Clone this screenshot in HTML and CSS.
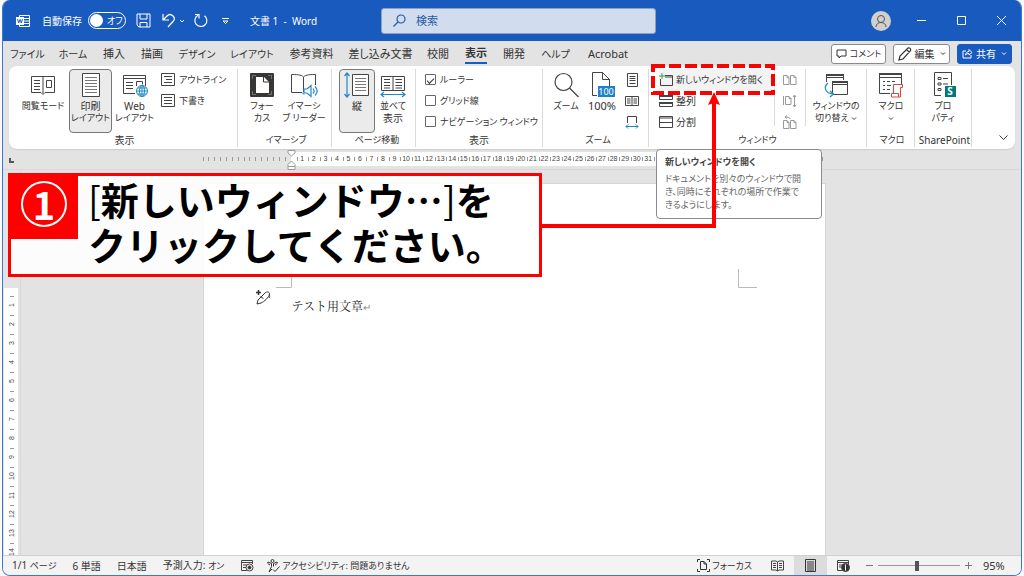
FILE: index.html
```html
<!DOCTYPE html>
<html lang="ja">
<head>
<meta charset="utf-8">
<title>文書 1 - Word</title>
<link rel="stylesheet" href="styles.css">
</head>
<body>
<div class="window">
  <header class="titlebar">
    <div class="title-left">
      <svg class="word-logo" width="14" height="14" viewBox="0 0 14 14" fill="none" stroke="#fff"><path d="M3.5 3V1.500h10v11h-10V11M8 4.500h5M8 7h5M8 9.500h5"/><path fill="#fff" stroke="none" d="M0 3h8v8H0z"/><path stroke="#185abd" d="M1.500 5l1.200 4L4 5.500 5.300 9l1.200-4"/></svg>
      <label class="autosave"><span class="autosave-name">自動保存</span><span class="switch"><input type="checkbox"><span class="kana">オフ</span></span></label>
      <button class="tool save" aria-label="保存"><svg width="15" height="15" viewBox="0 0 15 15" fill="none" stroke="#fff"><path d="M1 1h13v13H3l-2-2zM4 1v5h7V1M4 14V9.500h7V14"/></svg></button>
      <button class="tool undo" aria-label="元に戻す"><svg width="13" height="15" viewBox="0 0 13 15" fill="none" stroke="#fff" stroke-width="1.200"><path d="M1 1v6h6M1 7l4-4c2-2 4-2 6 0s1.500 4 0 5.500L6 14"/></svg><svg width="6" height="4" viewBox="0 0 6 4" fill="none" stroke="#fff"><path d="M1 1l2 2 2-2"/></svg></button>
      <button class="tool redo" aria-label="繰り返し"><svg width="14" height="15" viewBox="0 0 14 15" fill="none" stroke="#fff" stroke-width="1.200"><path d="M4 2.200A6 6 0 1 0 10.500 2.700M1 1.500h4v4"/></svg></button>
      <button class="tool more" aria-label="クイック アクセス"><svg width="7" height="8" viewBox="0 0 7 8" fill="none" stroke="#fff"><path d="M0 1.500h7M1 4l2.500 2.500L6 4z"/></svg></button>
      <span class="doc-title">文書 1&nbsp; -&nbsp; Word</span>
    </div>
    <label class="search"><svg width="13" height="13" viewBox="0 0 13 13" fill="none" stroke="#2458a8" stroke-width="1.200"><circle cx="8" cy="5" r="4"/><path d="M5 8l-4.500 4.500"/></svg><input type="search" placeholder="検索" aria-label="検索"></label>
    <div class="title-right">
      <button class="avatar" aria-label="アカウント"><svg width="20" height="20" viewBox="0 0 20 20" fill="none" stroke="#555"><circle cx="10" cy="10" r="10" fill="#d2d0ce" stroke="none"/><circle cx="10" cy="8" r="3.500"/><path d="M5 16c0-6 10-6 10 0"/></svg></button>
      <button class="caption" aria-label="最小化"><svg width="9" height="9" viewBox="0 0 9 9" stroke="#fff"><path d="M0 4.500h9"/></svg></button>
      <button class="caption" aria-label="最大化"><svg width="9" height="9" viewBox="0 0 9 9" fill="none" stroke="#fff"><path d="M.5.5h8v8h-8z"/></svg></button>
      <button class="caption" aria-label="閉じる"><svg width="9" height="9" viewBox="0 0 9 9" stroke="#fff"><path d="M0 0l9 9M9 0L0 9"/></svg></button>
    </div>
  </header>

  <div class="tab-row">
    <nav class="tabs">
      <button class="kana">ファイル</button><button class="kana">ホーム</button><button>挿入</button><button>描画</button><button class="kana">デザイン</button><button class="kana">レイアウト</button><button>参考資料</button><button>差し込み文書</button><button>校閲</button><button class="current"><span>表示</span></button><button>開発</button><button class="kana">ヘルプ</button><button>Acrobat</button>
    </nav>
    <div class="actions">
      <button class="action"><svg width="11" height="10" viewBox="0 0 11 10" fill="none" stroke="#333"><path d="M1 1h9v6H5L3 9V7H1z"/></svg><span class="kana">コメント</span></button>
      <button class="action edit"><svg width="14" height="14" viewBox="0 0 14 14" fill="none" stroke="#333" stroke-width="1.200"><path d="M1 13l1-4 8-8c1.500-.8 3.500 1 2.500 2.700L5 12zM8.500 2.500l3 3"/></svg>編集<svg class="arrow" width="6" height="4" viewBox="0 0 6 4" fill="none" stroke="#333"><path d="M1 .5l2 2 2-2"/></svg></button>
      <button class="action share"><svg width="11" height="11" viewBox="0 0 11 11" fill="none" stroke="#fff"><path d="M4 3H1v7h8V7M3.500 7C4 4.500 5.500 3.500 7 3.500V1.500L10 4.500 7 7V5.500C5.500 5.500 4.500 6 3.500 7z"/></svg>共有<svg class="arrow" width="6" height="4" viewBox="0 0 6 4" fill="none" stroke="#fff"><path d="M1 .5l2 2 2-2"/></svg></button>
    </div>
  </div>

  <main class="workspace">
  <section class="ribbon">
    <div class="group g-views">
      <div class="body">
        <button class="big w50"><svg width="26" height="24" viewBox="0 0 26 24" fill="none" stroke="#444"><path d="M13 3.500H1.500v16H11l2 2 2-2h9.500v-16zM13 3.500v17M4 7.500h6M4 10.500h6M4 13.500h6M4 16.500h6M16.500 7.500h5v7h-5z"/></svg><span class="kana">閲覧モード</span></button>
        <button class="big w43 pressed"><svg width="20" height="24" viewBox="0 0 20 24" fill="none" stroke="#444"><path fill="#fff" d="M1.500.5h17v23h-17z"/><path stroke="#777" d="M4 4.500h12M4 7.500h12M4 10.500h12M4 13.500h12M4 16.500h12M4 19.500h12"/></svg><span>印刷</span><span class="kana">レイアウト</span></button>
        <button class="big w43"><svg width="26" height="24" viewBox="0 0 26 24" fill="none" stroke="#444"><path d="M13 20.500H1.500v-18h22V13M1.500 5.500h22M4 9.500h7M4 12.500h7M4 15.500h7M14.500 13V8.500h6v3"/><g stroke="#2088c9"><circle cx="20" cy="18" r="5.500" fill="#fff"/><path d="M14.500 18h11M20 12.500v11M15.500 15h9M15.500 21h9"/><ellipse cx="20" cy="18" rx="2.500" ry="5.500"/></g></svg><span>Web</span><span class="kana">レイアウト</span></button>
        <div class="rows after-big">
          <button class="small"><svg width="14" height="13" viewBox="0 0 14 13" fill="none" stroke="#444"><path d="M.5.500h13v12H.5zM3 3.500h8M3 9.500h8M5 6.500h6"/></svg>アウトライン</button>
          <button class="small"><svg width="14" height="13" viewBox="0 0 14 13" fill="none" stroke="#444"><path d="M.5.500h13v12H.5zM3 3.500h8M3 6.500h8M3 9.500h8"/></svg>下書き</button>
        </div>
      </div>
      <div class="name">表示</div>
    </div>
    <div class="group g-immersive">
      <div class="body">
        <button class="big w42"><svg width="24" height="24" viewBox="0 0 24 24"><rect width="24" height="24" rx="1" fill="#393735"/><path fill="none" stroke="#fff" d="M2.500 6V2.500H6M18 2.500h3.500V6M2.500 18v3.500H6M18 21.500h3.500V18" opacity=".3"/><path fill="#fff" d="M6 4h8l5 5v11H6z"/><path fill="none" stroke="#393735" d="M13.500 4v5H19"/></svg><span class="kana">フォー</span><span class="kana">カス</span></button>
        <button class="big w42"><svg width="26" height="24" viewBox="0 0 26 24" fill="none" stroke="#444"><path d="M12.500 4c-2-2.500-8-2.500-12-2.500v18H11l2 2M12.500 4v15M12.500 4c2-2.500 8-2.500 12-2.500V12"/><path stroke="#2088c9" stroke-width="1.200" d="M13 16v4h3l4 3.500v-11L16 16zM22 15.500c1.500 2 1.500 3.500 0 5M24 13.500c3 3 3 6 0 9"/></svg><span class="kana">イマーシ</span><span class="kana">ブ リーダー</span></button>
      </div>
      <div class="name kana">イマーシブ</div>
    </div>
    <div class="group g-move">
      <div class="body">
        <button class="big w35 pressed"><svg width="26" height="26" viewBox="0 0 26 26" fill="none" stroke="#444"><path fill="#fff" d="M8.500 2.500h16v21h-16z"/><path stroke="#777" d="M11 6.500h11M11 9.500h11M11 12.500h11M11 15.500h11M11 18.500h11"/><path stroke="#2088c9" stroke-width="1.200" d="M3 1v24M.5 4L3 1l2.500 3M.5 22L3 25l2.500-3"/></svg><span>縦</span></button>
        <button class="big w35"><svg width="26" height="24" viewBox="0 0 26 24" fill="none" stroke="#444"><path d="M1.500 3.500h23v14h-23zM13 3.500v14M4 6.500h6M4 9.500h6M4 12.500h6M4 15h6M15.500 6.500H22M15.500 9.500H22M15.500 12.500H22M15.500 15H22"/><path stroke="#2088c9" stroke-width="1.200" d="M1 21.500h24M4 19l-3 2.500L4 24M22 19l3 2.500L22 24"/></svg><span class="kana">並べて</span><span>表示</span></button>
      </div>
      <div class="name kana">ページ移動</div>
    </div>
    <div class="group g-show">
      <div class="body">
        <div class="rows">
          <label class="small"><input type="checkbox" class="tick" checked>ルーラー</label>
          <label class="small"><input type="checkbox" class="tick">グリッド線</label>
          <label class="small"><input type="checkbox" class="tick">ナビゲーション ウィンドウ</label>
        </div>
      </div>
      <div class="name">表示</div>
    </div>
    <div class="group g-zoom">
      <div class="body">
        <button class="big w35"><svg width="26" height="24" viewBox="0 0 26 24" fill="none" stroke="#444" stroke-width="1.200"><circle cx="10.500" cy="9" r="8.500"/><path d="M16.500 15l9 9"/></svg><span class="kana">ズーム</span></button>
        <button class="big w35"><svg width="26" height="26" viewBox="0 0 26 26" fill="none" stroke="#444"><path d="M8 23.500H3.500V.5h10l7 7V14M13.500.5v7h7"/><path fill="#1c83cb" stroke="none" d="M9 14h17v11H9z"/><text x="17" y="23" class="hundred">100</text></svg><span class="percent">100%</span></button>
        <div class="rows icons">
          <button class="small" aria-label="1 ページ"><svg width="14" height="14" viewBox="0 0 14 14" fill="none" stroke="#444"><path d="M2.500.5h10v13h-10zM4.500 3.500h6M4.500 5.500h6M4.500 7.500h6M4.500 10.500h6"/></svg></button>
          <button class="small" aria-label="複数ページ"><svg width="14" height="14" viewBox="0 0 14 14" fill="none" stroke="#444"><path d="M.5 2.500h13v9H.5zM7 2.500v9M2 5h3.500M2 7h3.500M2 9h3.500M8.500 5H12M8.500 7H12M8.500 9H12"/></svg></button>
          <button class="small" aria-label="ページ幅を基準に表示"><svg width="14" height="14" viewBox="0 0 14 14" fill="none" stroke="#444"><path d="M2.500 8V1.500h9V8"/><path stroke="#2088c9" d="M1 11.500h12M3 9.500l-2 2 2 2M11 9.500l2 2-2 2"/></svg></button>
        </div>
      </div>
      <div class="name kana">ズーム</div>
    </div>
    <div class="group g-window">
      <div class="body">
        <div class="rows arrange">
          <button class="small hover"><svg width="14" height="14" viewBox="0 0 14 14" fill="none" stroke="#444"><path d="M1.500 6v6.500h12v-10H6M6 4h8"/><path stroke="#2fa04a" d="M3 0v6M0 3h6"/></svg>新しいウィンドウを開く</button>
          <button class="small"><svg width="14" height="14" viewBox="0 0 14 14" fill="none" stroke="#444"><path d="M.5 1.500h13v4H.5zM.5 8.500h13v4H.5z"/><path stroke-width="2" d="M0 2h14M0 9h14"/></svg><span class="kanji">整列</span></button>
          <button class="small"><svg width="14" height="14" viewBox="0 0 14 14" fill="none" stroke="#444"><path d="M.5 1.500h13v11H.5zM0 3h14M.5 7.500h13"/></svg><span class="kanji">分割</span></button>
          <div class="hover-marker"><svg width="124" height="31" viewBox="0 0 124 31" fill="none" stroke="#f00" stroke-width="4"><path stroke-dasharray="12 4" d="M2 2h120v27H2z"/></svg></div>
        </div>
        <div class="rows compare">
          <button class="small" disabled aria-label="並べて比較"><svg width="14" height="14" viewBox="0 0 14 14" fill="none" stroke="#999"><path d="M.5 2.500H4l2 2v7H.5zM7.500 2.500H11l2 2v7H7.500zM4 2.500v2h2M11 2.500v2h2"/></svg></button>
          <button class="small" disabled aria-label="同時にスクロール"><svg width="14" height="14" viewBox="0 0 14 14" fill="none" stroke="#999"><path d="M.5 2v9M2.500 2.500H6l2 2v6H2.500zM6 2.500v2h2M11.500 1v12M10 3l1.500-2L13 3M10 11l1.500 2L13 11"/></svg></button>
          <button class="small" disabled aria-label="ウィンドウの位置を元に戻す"><svg width="14" height="14" viewBox="0 0 14 14" fill="none" stroke="#999"><path d="M.5 5.500H4l2 2v6H.5zM7.500 5.500H11l2 2v6H7.500zM4 5.500v2h2M11 5.500v2h2M7 4c0-2-3-2-5-2M4 .5L2 2l2 1.500"/></svg></button>
        </div>
        <button class="big switch-win"><svg width="26" height="24" viewBox="0 0 26 24" fill="none" stroke="#444"><path d="M3.500 9V1.500h17V7M9.500 21.500v-13h15v13zM3.500 4.500h17M9.500 11.500h15"/><path stroke-width="2" d="M3 2h18M9 9h16"/><path stroke="#2088c9" stroke-width="1.200" d="M5 10c-5 4-3 10 5 11M7 18l3.500 3L7 24"/></svg><span class="kana">ウィンドウの</span><span class="kana">切り替え <svg class="arrow" width="6" height="4" viewBox="0 0 6 4" fill="none" stroke="#444"><path d="M1 .5l2 2 2-2"/></svg></span></button>
      </div>
      <div class="name kana">ウィンドウ</div>
    </div>
    <div class="group g-macro">
      <div class="body">
        <button class="big w42"><svg width="26" height="26" viewBox="0 0 26 26" fill="none" stroke="#444"><path d="M12 21.500H1.500V1.500h22V12M1.500 5.500h22M5 9.500h2M9 9.500h3M14 9.500h3M5 13.500h2M9 13.500h4M5 17.500h2M9 17.500h3"/><path stroke-width="2" d="M1 2h23"/><path fill="#fff" stroke="#e0453c" d="M15.500 21.500v-9h9v3h-2V25h-9v-3.500h7V25"/></svg><span class="kana">マクロ</span><span><svg class="arrow" width="6" height="4" viewBox="0 0 6 4" fill="none" stroke="#444"><path d="M1 .5l2 2 2-2"/></svg></span></button>
      </div>
      <div class="name kana">マクロ</div>
    </div>
    <div class="group g-share">
      <div class="body">
        <button class="big w50"><svg width="26" height="26" viewBox="0 0 26 26" fill="none" stroke="#444"><path d="M11 23.500H4.500V.5h17V13M8 5.500h3v2H8zM13 6.500h5M8 11h3v2H8zM13 12h5M8 16.500h3v2H8z"/><path fill="#03787c" stroke="none" d="M15 14h11v11H15z"/><text x="20" y="23" class="s-mark">S</text></svg><span class="kana">プロ</span><span class="kana">パティ</span></button>
      </div>
      <div class="name">SharePoint</div>
    </div>
    <button class="collapse" aria-label="リボンを折りたたむ"><svg width="9" height="6" viewBox="0 0 9 6" fill="none" stroke="#333"><path d="M.5.500l4 4 4-4"/></svg></button>
  </section>

  <div class="ruler-row">
    <div class="tab-stop"><svg width="5" height="5" viewBox="0 0 5 5" fill="none" stroke="#555" stroke-width="2"><path d="M1 0v4h4"/></svg></div>
    <div class="ruler-space">
      <div class="ruler">
        <div class="ruler-margin"><i></i><i></i><i></i><i></i><i></i><i></i><i></i><i></i><i></i><i></i><i></i><i></i><i></i><i></i><i></i></div>
        <div class="scale">
          <svg class="indent" width="9" height="20" viewBox="0 0 9 20" fill="#fff" stroke="#999"><path d="M1 .5h7V3L4.500 6 1 3zM1 14.500L4.500 11 8 14.500v5H1zM1 16.500h7"/></svg>
          <b>1</b><b>2</b><b>3</b><b>4</b><b>5</b><b>6</b><b>7</b><b>8</b><b>9</b><b>10</b><b>11</b><b>12</b><b>13</b><b>14</b><b>15</b><b>16</b><b>17</b><b>18</b><b>19</b><b>20</b><b>21</b><b>22</b><b>23</b><b>24</b><b>25</b><b>26</b><b>27</b><b>28</b><b>29</b><b>30</b><b>31</b><b></b><b></b><b></b><b></b><b></b><b></b><b></b><b></b>
        </div>
        <div class="ruler-end"><i></i></div>
      </div>
    </div>
  </div>

  <div class="canvas">
    <div class="v-ruler"><div class="v-scale"><b>1</b><b>2</b><b>3</b><b>4</b><b>5</b><b>6</b><b>7</b><b>8</b><b>9</b><b>10</b><b>11</b><b>12</b><b>13</b><b>14</b></div></div>
    <div class="page-space">
      <article class="page">
        <svg class="corner-left" width="19" height="19" viewBox="0 0 19 19" fill="none" stroke="#bbb"><path d="M3 18.500h15.500V0"/></svg>
        <svg class="corner-right" width="19" height="19" viewBox="0 0 19 19" fill="none" stroke="#bbb"><path d="M.5 0v18.500H19"/></svg>
        <svg class="pen" width="15" height="15" viewBox="0 0 15 15" fill="none" stroke="#333"><path d="M2.500 0v5M0 2.500h5" stroke-width="1.500"/><path d="M1 14l1-4 7-7c2-2 5-1 4.500 1.500S8 12 5 13zM4.500 6.500l3 2M13 4c1 2 1 3 0 4"/></svg>
        <p class="doc-text">テスト用文章<span class="mark">↵</span></p>
      </article>
    </div>
  </div>

  <aside class="callout">
    <div class="step"><span>1</span></div>
    <p><span class="bracket">[</span>新しいウィンドウ…<span class="bracket">]</span>を<br>クリックしてください。</p>
  </aside>
  <div class="tooltip" role="tooltip"><strong>新しいウィンドウを開く</strong><p>ドキュメントを別々のウィンドウで開<br>き、同時にそれぞれの場所で作業で<br>きるようにします。</p></div>
  <svg class="pointer" width="180" height="138" viewBox="0 0 180 138"><path fill="none" stroke="#f00" stroke-width="4" d="M0 135h174V10"/><path fill="#f00" d="M174 1l6 13-6-2-6 2z"/></svg>
  </main>

  <footer class="status">
    <div class="status-left">
      <span>1/1 <span class="kana">ページ</span></span><span>6 単語</span><span>日本語</span><span>予測入力: <span class="kana">オン</span></span>
      <svg width="14" height="13" viewBox="0 0 14 13" fill="none" stroke="#444"><path d="M7 11.500H1.500v-10h11V5M1.500 3.500h11M3 6h4M3 8.500h3"/><circle cx="9.500" cy="8.500" r="3.500" fill="#f3f3f3"/><circle cx="9.500" cy="8.500" r="1.500" fill="#333"/></svg>
      <button class="access kana"><svg width="13" height="14" viewBox="0 0 13 14" fill="none" stroke="#333"><circle cx="5.500" cy="2" r="1.500"/><path d="M1 3l3.500 1.500v3L2 13M10 3L6.500 4.500v3M2 13l3-3M1 3c-1 1 0 2 2 3M10 3c1 1 0 2-2 3M6 10.500l2 2 4.500-5"/></svg>アクセシビリティ: 問題ありません</button>
    </div>
    <div class="status-right">
      <button class="focus kana"><svg width="13" height="13" viewBox="0 0 13 13" fill="none" stroke="#333"><path d="M.5 3V.5H3M10 .5h2.500V3M.5 10v2.500H3M10 12.500h2.500V10M3.500 2.500H7l2.500 2.500v5.500h-6zM7 2.500V5h2.500"/></svg>フォーカス</button>
      <button class="view" aria-label="閲覧モード"><svg width="13" height="12" viewBox="0 0 13 12" fill="none" stroke="#444"><path d="M6.500 2L5 1H.5v9H5l1.500 1L8 10h4.500V1H8zM6.500 2v9M2 3.500h3M2 5.500h3M2 7.500h3M8 3.500h3M8 5.500h3M8 7.500h3"/></svg></button>
      <button class="view active" aria-label="印刷レイアウト"><svg width="11" height="13" viewBox="0 0 11 13" fill="none" stroke="#333"><path d="M.5.500h10v12H.5zM2 3h7M2 5h7M2 7h7M2 9h7M2 11h7"/></svg></button>
      <button class="view" aria-label="Web レイアウト"><svg width="13" height="13" viewBox="0 0 13 13" fill="none" stroke="#444"><path d="M5 11.500H.5V1.500h11V5M.5 3.500h11M2 6h4M2 8h3"/><circle cx="8.500" cy="8.500" r="4" fill="#333"/><path stroke="#fff" d="M8.500 5.500v6"/></svg></button>
      <button class="step-btn" aria-label="縮小"><svg width="7" height="7" viewBox="0 0 7 7" stroke="#777"><path d="M0 3.500h7"/></svg></button>
      <input class="zoom" type="range" min="10" max="190" value="95" aria-label="ズーム">
      <button class="step-btn" aria-label="拡大"><svg width="7" height="7" viewBox="0 0 7 7" stroke="#777"><path d="M0 3.500h7M3.500 0v7"/></svg></button>
      <span class="level">95%</span>
    </div>
  </footer>
</div>
</body>
</html>
```
FILE: styles.css
```css
* { box-sizing: border-box; }
body {
  margin: 0;
  background: #fafafa;
  color: #333;
  font: 10px/12px "Noto Sans", "Noto Sans CJK JP", sans-serif;
  font-feature-settings: "palt";
}
button, input {
  font: inherit;
  font-feature-settings: inherit;
  color: inherit;
  background: none;
  border: 0;
  padding: 0;
  margin: 0;
}
p { margin: 0; }
svg { display: block; flex: none; overflow: visible; }
.kana { font-size: 9px; }
.window {
  height: 100vh;
  margin: 0 2px;
  display: flex;
  flex-direction: column;
  border: solid #3b78cf;
  border-width: 0 1px 1px;
  border-radius: 8px;
  overflow: hidden;
  background: #e3e3e3;
}

/* title bar */
.titlebar {
  display: flex;
  align-items: center;
  height: 41px;
  flex: none;
  background: #185abd;
  color: #fff;
}
.title-left { display: flex; align-items: center; flex: 0 0 378px; padding-left: 13px; white-space: nowrap; }
.autosave { display: flex; align-items: center; gap: 6px; margin-left: 12px; }
.autosave-name { width: 40px; }
.switch {
  display: flex;
  align-items: center;
  gap: 4px;
  width: 38px;
  height: 17px;
  padding-left: 1px;
  border: 1px solid #fff;
  border-radius: 9px;
}
.switch input { appearance: none; width: 13px; height: 13px; border-radius: 50%; background: #fff; }
.tool { display: flex; align-items: center; }
.save { margin-left: 10px; }
.undo { margin-left: 11px; width: 23px; justify-content: space-between; }
.redo { margin-left: 9px; }
.more { margin-left: 14px; }
.doc-title { margin-left: 21px; }
.search {
  display: flex;
  align-items: center;
  gap: 10px;
  flex: 0 1 275px;
  height: 26px;
  padding: 0 11px;
  border: 1px solid #8f9fb8;
  border-radius: 3px;
  background: #d1dcee;
}
.search input { flex: 1; min-width: 0; font-size: 11px; outline: 0; }
.search input::placeholder { color: #2458a8; opacity: 1; }
.title-right { display: flex; align-items: center; margin-left: auto; }
.avatar { margin-right: 10px; }
.caption { display: flex; justify-content: center; width: 40px; }

/* tabs */
.tab-row { display: flex; justify-content: space-between; align-items: center; height: 25px; flex: none; padding: 0 9px 0 1px; }
.tabs {
  display: grid;
  grid-template-columns: 47px 44px 38px 38px 52px 58px 61px 77px 38px 38px 38px 45px 60px;
  font-size: 11px;
  line-height: 18px;
}
.tabs button { white-space: nowrap; text-align: center; }
.tabs .kana { font-size: 10px; }
.current { font-weight: 700; }
.current span { display: inline-block; border-bottom: 2px solid #185abd; }
.actions { display: flex; gap: 7px; }
.action {
  display: flex;
  align-items: center;
  justify-content: center;
  gap: 3px;
  width: 55px;
  height: 20px;
  border: 1px solid #8a8a8a;
  border-radius: 3px;
  background: #fff;
  white-space: nowrap;
}
.edit { width: 57px; }
.action .arrow { margin-left: 2px; }
.share { border-color: #185abd; background: #185abd; color: #fff; }

/* ribbon */
.workspace { flex: 1; min-height: 0; position: relative; display: flex; flex-direction: column; }
.ribbon {
  display: flex;
  flex: none;
  margin: 0 6px;
  padding: 3px 0 2px;
  border-radius: 8px;
  background: #fff;
  box-shadow: 0 1px 1px #ccc;
}
.group { border-right: 1px solid #dadada; }
.body { display: flex; height: 64px; }
.name { text-align: center; line-height: 14px; white-space: nowrap; }
.g-views { width: 229px; padding-left: 9px; }
.g-views .body { gap: 1px; }
.g-immersive { width: 94px; padding-left: 3px; }
.g-move { width: 84px; padding-left: 7px; }
.g-show { width: 127px; padding-left: 9px; }
.g-zoom { width: 106px; padding-left: 5px; }
.g-window { width: 218px; }
.g-macro { width: 48px; padding-left: 3px; }
.g-share { width: 57px; padding-left: 3px; }
.g-views .name { margin-left: -6px; }
.g-show .name { margin-left: -9px; }
.big {
  display: flex;
  flex-direction: column;
  align-items: center;
  justify-content: flex-start;
  flex: none;
  padding-top: 2px;
  border: 1px solid transparent;
  border-radius: 4px;
  white-space: nowrap;
}
.big > svg { height: 26px; margin-bottom: 2px; }
.big > span { height: 12px; line-height: 12px; }
.w35 { width: 36px; }
.w42 { width: 42px; }
.w43 { width: 43px; }
.w50 { width: 50px; }
.pressed { border-color: #777; background: #ebebeb; }
.percent { font-size: 11px; }
.arrow { display: inline-block; vertical-align: middle; }
.hundred { fill: #fff; stroke: none; font-size: 9px; text-anchor: middle; }
.s-mark { fill: #fff; stroke: none; font-size: 10px; font-weight: 700; text-anchor: middle; }
.rows { display: flex; flex-direction: column; align-items: flex-start; }
.after-big { margin-left: 4px; }
.small { display: flex; align-items: center; gap: 4px; flex: none; height: 21px; font-size: 9px; white-space: nowrap; }
.kanji { font-size: 10px; }
.icons { margin-left: 5px; }
.tick {
  appearance: none;
  display: grid;
  place-items: center;
  width: 11px;
  height: 11px;
  border: 1px solid #666;
  border-radius: 1px;
  background: #fff;
}
.tick:checked::before { content: ""; width: 6px; height: 3px; border: solid #333; border-width: 0 0 1px 1px; rotate: -45deg; }
.arrange { width: 126px; height: 57px; padding-left: 10px; border-right: 1px solid #dadada; position: relative; }
.arrange .small { gap: 3px; }
.arrange .hover { width: 112px; background: #f3f3f3; }
.hover-marker { position: absolute; left: 2px; top: -5px; }
.compare { width: 31px; height: 57px; align-items: center; border-right: 1px solid #dadada; }
.switch-win { width: 60px; }
.collapse { margin: auto 7px 6px auto; }

/* rulers */
.ruler-row { display: flex; height: 21px; flex: none; border-bottom: 1px solid #d8d8d8; }
.tab-stop { width: 18px; padding: 9px 0 0 6px; }
.ruler-space, .page-space { flex: 1; display: flex; justify-content: center; padding-right: 14px; }
.ruler { display: flex; flex: 0 1 623px; min-width: 0; padding: 3px 0; }
.ruler-margin { display: flex; align-items: center; width: 88px; }
.ruler-margin i { flex: 1; height: 4px; border-left: 1px solid #999; }
.scale { position: relative; display: flex; align-items: center; width: 456px; padding-left: 6px; background: #fff; font: 7px/14px "Liberation Sans", sans-serif; color: #444; }
.scale b { position: relative; flex: 1; width: 0; height: 14px; text-align: center; font-weight: 400; }
.scale b::before { content: ""; position: absolute; left: 0; top: 5px; height: 4px; border-left: 1px solid #999; }
.indent { position: absolute; left: -4px; top: -2px; }
.ruler-end { flex: 1; display: flex; justify-content: flex-end; align-items: center; }
.ruler-end i { height: 4px; border-left: 1px solid #999; margin-right: 3px; }

/* document */
.canvas { flex: 1; min-height: 0; display: flex; overflow: hidden; }
.v-ruler { width: 18px; flex: none; padding: 118px 2px 0 1px; border-right: 1px solid #d8d8d8; }
.v-scale { padding-top: 8px; background: #fff; font: 7px/15px "Liberation Sans", sans-serif; color: #444; }
.v-scale b { position: relative; display: flex; align-items: center; justify-content: center; width: 15px; height: 19px; writing-mode: vertical-rl; rotate: 180deg; font-weight: 400; }
.v-scale b::before { content: ""; position: absolute; left: 5px; bottom: 0; width: 4px; border-top: 1px solid #999; }
.page-space { padding-top: 13px; }
.page { position: relative; flex: 0 1 623px; background: #fff; border: solid #d5d5d5; border-width: 1px 1px 0; padding: 113px 88px 0; }
.doc-text { font: 12px/18px "Noto Serif CJK JP", "Noto Sans CJK JP", serif; color: #222; }
.mark { font-size: 10px; color: #888; }
.corner-left { position: absolute; left: 69px; top: 85px; }
.corner-right { position: absolute; right: 68px; top: 85px; }
.pen { position: absolute; left: 52px; top: 106px; }

/* annotations */
.callout {
  position: absolute;
  left: 5px;
  top: 107px;
  width: 534px;
  height: 104px;
  display: flex;
  border: 3px solid #f00;
  background: rgba(255, 255, 255, .88);
  color: #000;
}
.step { width: 67px; height: 63px; background: #f00; color: #fff; padding: 5px 0 0 10px; }
.step span { display: flex; align-items: center; justify-content: center; width: 46px; height: 46px; border: 2px solid #fff; border-radius: 50%; font: 700 38px/42px "Noto Sans CJK JP", sans-serif; }
.callout p { padding-left: 10px; white-space: nowrap; font: 700 38px/45px "Noto Sans CJK JP", sans-serif; font-feature-settings: normal; }
.bracket { font-weight: 400; }
.tooltip {
  position: absolute;
  left: 653px;
  top: 83px;
  width: 166px;
  height: 70px;
  padding: 6px 8px;
  border: 1px solid #8a8a8a;
  border-radius: 4px;
  background: #fff;
  color: #666;
  font-size: 9px;
  white-space: nowrap;
}
.tooltip strong { display: block; color: #444; margin-bottom: 4px; }
.tooltip p { line-height: 13px; }
.pointer { position: absolute; left: 537px; top: 25px; }

/* status bar */
.status { display: flex; justify-content: space-between; height: 20px; flex: none; border-top: 1px solid #d0d0d0; background: #f3f3f3; white-space: nowrap; }
.status-left, .status-right { display: flex; align-items: center; }
.status-left { gap: 16px; padding-left: 9px; }
.access, .focus { display: flex; align-items: center; gap: 2px; }
.access { margin-left: -3px; }
.focus { margin-right: 9px; }
.view { display: flex; align-items: center; justify-content: center; align-self: stretch; width: 33px; }
.active { background: #dcdcdc; }
.step-btn { margin: 0 5px; }
.view + .step-btn { margin-left: 6px; }
.zoom { appearance: none; width: 82px; height: 10px; background: linear-gradient(#999, #999) center / 100% 1px no-repeat; }
.zoom::-webkit-slider-thumb { appearance: none; width: 4px; height: 10px; background: #555; }
.level { width: 44px; padding-left: 6px; font-size: 11px; }
```
